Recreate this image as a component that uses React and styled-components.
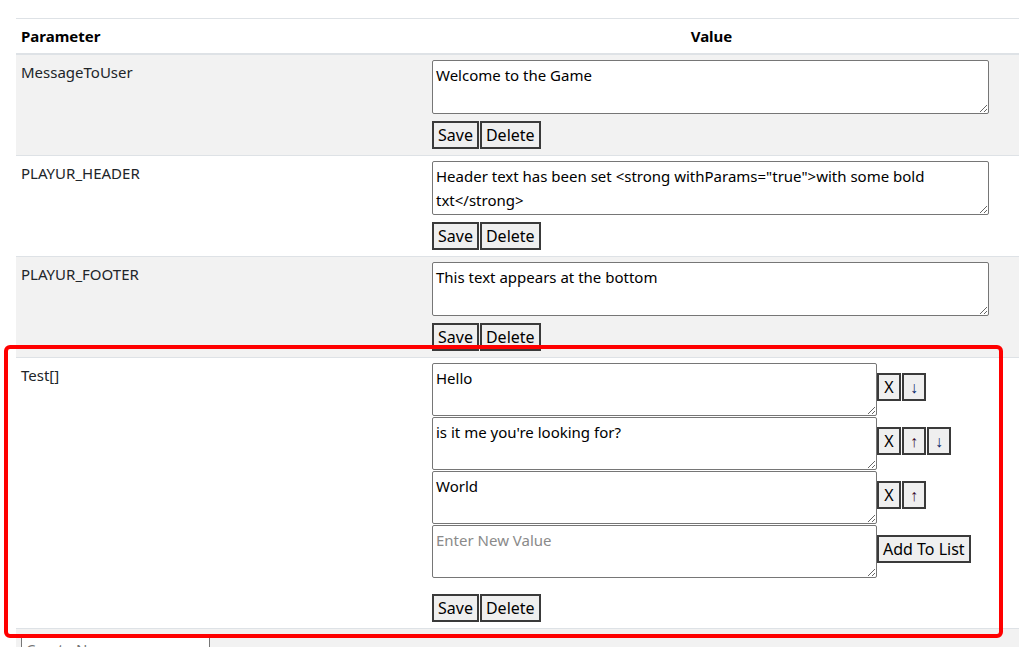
import React from 'react';
import styled, { createGlobalStyle } from 'styled-components';

const GlobalStyle = createGlobalStyle`
  html, body {
    margin: 0;
    padding: 0;
    width: 1019px;
    height: 647px;
    overflow: hidden;
    background: #fff;
  }
  body {
    font-family: "Noto Sans", "Open Sans", sans-serif;
    font-size: 15px;
    color: #212529;
  }
`

const Page = styled.div`
  position: relative;
  padding: 18px 0 0 16px;
`

const Table = styled.table`
  width: 1040px;
  border-collapse: collapse;
  border-top: 1px solid #dee2e6;
`

const HeadCell = styled.th`
  padding: 5px 5px 5px;
  font-weight: 700;
  color: #000;
  text-align: ${p => (p.center ? 'center' : 'left')};
  padding-right: ${p => (p.center ? '66px' : '5px')};
  border-bottom: 2px solid #dee2e6;
  height: 24px;
`

const Row = styled.tr`
  background: ${p => (p.striped ? '#f2f2f2' : '#fff')};
  border-bottom: 1px solid #dee2e6;
`

const NameCell = styled.td`
  width: 402px;
  padding: 5px 5px;
  vertical-align: top;
  line-height: 24px;
`

const ValueCell = styled.td`
  padding: 5px 5px 6px 4px;
  vertical-align: top;
`

const TextArea = styled.textarea`
  display: block;
  box-sizing: border-box;
  width: ${p => (p.narrow ? '445px' : '557px')};
  height: ${p => (p.narrow ? '53px' : '54px')};
  margin: 0;
  padding: 2px 3px;
  border: 1px solid #767676;
  border-radius: 2px;
  font-family: inherit;
  font-size: 15px;
  line-height: 24px;
  color: #000;
  background: #fff;
  resize: both;
  &::placeholder {
    color: #8a8a8a;
  }
`

const ButtonRow = styled.div`
  display: flex;
  gap: 1px;
  margin-top: ${p => p.top || '7px'};
`

const Button = styled.button`
  box-sizing: border-box;
  height: 28px;
  padding: 0 ${p => (p.tight ? '3px' : '4px')};
  min-width: ${p => (p.tight ? '24px' : 'auto')};
  border: 2px solid #3a3a3a;
  border-radius: 0;
  background: #efefef;
  font-family: inherit;
  font-size: 16px;
  color: #000;
  line-height: 22px;
`

const ListItem = styled.div`
  display: flex;
  align-items: flex-start;
  margin-bottom: 1px;
`

const ItemButtons = styled.div`
  display: flex;
  gap: 1px;
  margin-top: 10px;
`

const CreateInput = styled.input`
  box-sizing: border-box;
  width: 189px;
  height: 30px;
  margin: 4px 0 0 4px;
  border: 1px solid #767676;
  padding: 2px 4px;
  font-family: inherit;
  font-size: 15px;
`

const Highlight = styled.div`
  position: absolute;
  left: 4px;
  top: 345px;
  width: 999px;
  height: 293px;
  box-sizing: border-box;
  border: 4px solid #ff0000;
  border-radius: 6px;
  pointer-events: none;
`

const Arrow = styled.span`
  color: ${p => (p.up ? '#3a0a2c' : '#0b2a6a')};
`

const params = [
  { name: 'MessageToUser', value: 'Welcome to the Game', striped: true },
  { name: 'PLAYUR_HEADER', value: 'Header text has been set <strong withParams="true">with some bold txt</strong>' },
  { name: 'PLAYUR_FOOTER', value: 'This text appears at the bottom', striped: true },
];

const listValues = ['Hello', "is it me you're looking for?", 'World'];

export default function App() {
  return (
    <Page>
      <GlobalStyle />
      <Table>
        <thead>
          <tr>
            <HeadCell>Parameter</HeadCell>
            <HeadCell center>Value</HeadCell>
          </tr>
        </thead>
        <tbody>
          {params.map(p => (
            <Row key={p.name} striped={p.striped}>
              <NameCell>{p.name}</NameCell>
              <ValueCell>
                <TextArea defaultValue={p.value} />
                <ButtonRow>
                  <Button>Save</Button>
                  <Button>Delete</Button>
                </ButtonRow>
              </ValueCell>
            </Row>
          ))}
          <Row>
            <NameCell>Test[]</NameCell>
            <ValueCell>
              {listValues.map((v, i) => (
                <ListItem key={v}>
                  <TextArea narrow defaultValue={v} />
                  <ItemButtons>
                    <Button tight>X</Button>
                    {i > 0 && <Button tight><Arrow up>↑</Arrow></Button>}
                    {i < listValues.length - 1 && <Button tight><Arrow>↓</Arrow></Button>}
                  </ItemButtons>
                </ListItem>
              ))}
              <ListItem>
                <TextArea narrow placeholder="Enter New Value" />
                <ItemButtons>
                  <Button>Add To List</Button>
                </ItemButtons>
              </ListItem>
              <ButtonRow top="16px">
                <Button>Save</Button>
                <Button>Delete</Button>
              </ButtonRow>
            </ValueCell>
          </Row>
          <Row striped>
            <td colSpan={2}>
              <CreateInput placeholder="Create New" />
            </td>
          </Row>
        </tbody>
      </Table>
      <Highlight />
    </Page>
  );
}
